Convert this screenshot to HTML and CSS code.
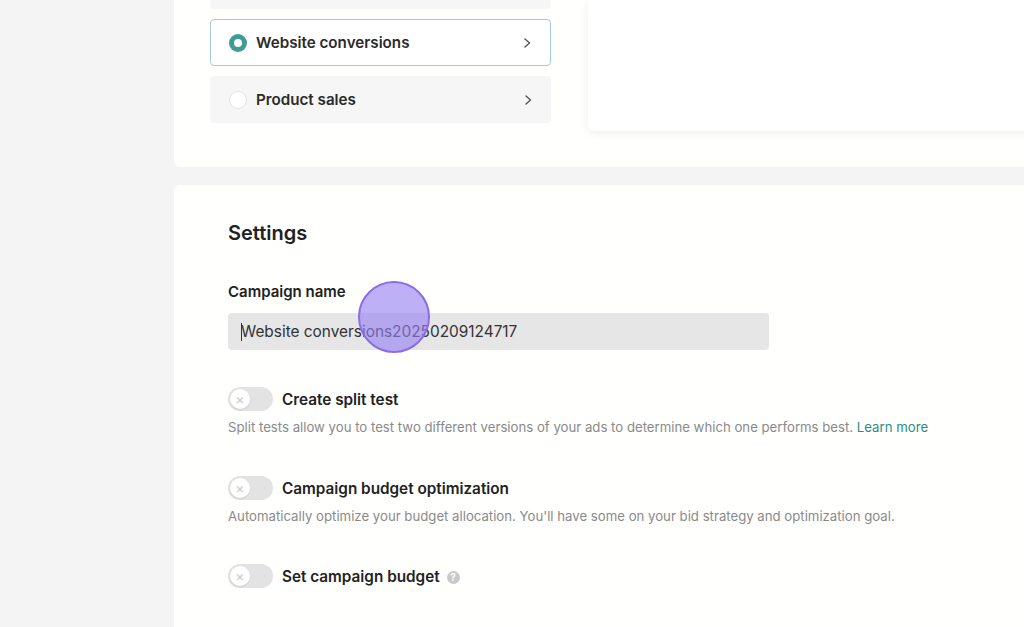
FILE: index.html
```html
<!DOCTYPE html>
<html>
<head>
<meta charset="utf-8">
<link rel="stylesheet" href="styles.css">
</head>
<body>
<div class="page">
  <aside class="side"></aside>
  <main class="main">
    <section class="card top-card">
      <div class="options">
        <div class="option option-muted"></div>
        <div class="option option-selected"><span class="radio radio-on"></span><span class="opt-label">Website conversions</span>
          <svg class="chev-svg" width="10" height="12" viewBox="0 0 10 12"><path d="M3 2l4.5 4L3 10" fill="none" stroke="#555" stroke-width="1.4" stroke-linecap="round" stroke-linejoin="round"/></svg>
        </div>
        <div class="option option-muted"><span class="radio"></span><span class="opt-label">Product sales</span>
          <svg class="chev-svg" width="10" height="12" viewBox="0 0 10 12"><path d="M3 2l4.5 4L3 10" fill="none" stroke="#555" stroke-width="1.4" stroke-linecap="round" stroke-linejoin="round"/></svg>
        </div>
      </div>
      <div class="preview"></div>
    </section>

    <section class="card settings">
      <h2 class="title">Settings</h2>
      <label class="field-label">Campaign name</label>
      <div class="input-wrap">
        <div class="input"><span class="caret"></span>Website conversions20250209124717</div>
        <span class="pointer"></span>
      </div>

      <div class="setting">
        <div class="toggle-row">
          <span class="toggle"><span class="knob">×</span></span>
          <span class="setting-label">Create split test</span>
        </div>
        <p class="desc">Split tests allow you to test two different versions of your ads to determine which one performs best. <a class="link">Learn more</a></p>
      </div>

      <div class="setting">
        <div class="toggle-row">
          <span class="toggle"><span class="knob">×</span></span>
          <span class="setting-label">Campaign budget optimization</span>
        </div>
        <p class="desc">Automatically optimize your budget allocation. You'll have some on your bid strategy and optimization goal.</p>
      </div>

      <div class="setting setting-last">
        <div class="toggle-row">
          <span class="toggle"><span class="knob">×</span></span>
          <span class="setting-label">Set campaign budget</span>
          <span class="help">?</span>
        </div>
      </div>
    </section>
  </main>
</div>
</body>
</html>
```

FILE: styles.css
```css
* { box-sizing: border-box; }
html, body { margin: 0; padding: 0; }
body {
  background: #f4f4f4;
  font-family: Inter, "Liberation Sans", Arial, sans-serif;
  color: #222;
  width: 1024px;
  height: 627px;
  overflow: hidden;
}
.page { display: flex; height: 627px; }
.side { width: 174px; flex: none; }
.main { flex: 1; display: flex; flex-direction: column; gap: 18px; min-width: 0; }
.card { background: #fffffe; }
.top-card {
  height: 167px;
  flex: none;
  display: flex;
  padding-left: 36px;
  border-radius: 0 0 0 6px;
  overflow: hidden;
}
.options { width: 341px; display: flex; flex-direction: column; gap: 10px; margin-top: -38px; }
.option {
  height: 47px;
  flex: none;
  border-radius: 4px;
  display: flex;
  align-items: center;
  padding: 0 18px 0 19px;
  font-size: 15.2px;
  font-weight: 600;
  color: #2a2a2a;
}
.option-muted { background: #f6f6f6; }
.option-selected { background: #fff; border: 1px solid #a8cecb; padding-left: 18px; }
.radio {
  width: 18px; height: 18px; border-radius: 50%;
  background: #fff; border: 1px solid #e4e4e4;
  flex: none;
  margin-right: 9px;
}
.radio-on { background: #3f9b95; border: none; position: relative; }
.radio-on::after {
  content: ""; position: absolute; left: 5px; top: 5px; width: 8px; height: 8px; border-radius: 50%; background: #fff;
}
.opt-label { flex: 1; }
.chev-svg { flex: none; }
.preview {
  flex: 1;
  margin-left: 37px;
  margin-right: -20px;
  height: 131px;
  background: #fff;
  border-radius: 0 0 0 6px;
  box-shadow: 0 2px 10px rgba(0,0,0,0.07);
}
.settings {
  flex: 1;
  border-radius: 6px 0 0 0;
  padding: 34px 0 0 54px;
}
.title { margin: 0; font-size: 20px; font-weight: 600; color: #222; line-height: 28px; }
.field-label { display: block; margin-top: 34px; font-size: 15px; font-weight: 600; color: #222; line-height: 22px; }
.input-wrap { position: relative; width: 541px; margin-top: 10px; }
.input {
  height: 37px; background: #e6e6e6; border-radius: 4px;
  font-size: 15.4px; color: #333; line-height: 37px; padding-left: 13px;
  position: relative;
}
.caret { position: absolute; left: 13px; top: 10px; width: 1px; height: 18px; background: #333; }
.pointer {
  position: absolute; left: 130px; top: -32px; width: 72px; height: 72px; border-radius: 50%;
  background: rgba(150, 128, 240, 0.62);
  border: 2px solid #8a6ce8;
}
.setting { margin-top: 37px; }
.setting + .setting { margin-top: 40px; }
.setting + .setting-last { margin-top: 39px; }
.toggle-row { display: flex; align-items: center; height: 24px; }
.toggle {
  width: 45px; height: 24px; border-radius: 12px; background: #e3e3e3; flex: none;
  display: flex; align-items: center; padding-left: 2px; margin-right: 9px;
}
.knob {
  width: 20px; height: 20px; border-radius: 50%; background: #fff;
  display: flex; align-items: center; justify-content: center;
  color: #c8c8c8; font-size: 14px; line-height: 1; font-weight: 400;
  box-shadow: 0 1px 2px rgba(0,0,0,0.1);
}
.setting-label { font-size: 15.3px; font-weight: 600; color: #222; }
.help {
  width: 13px; height: 13px; border-radius: 50%; background: #c9c9c9; color: #fff;
  font-size: 10px; font-weight: 700; display: inline-flex; align-items: center; justify-content: center;
  margin-left: 7px; margin-top: 2px;
}
.desc { margin: 7px 0 0; font-size: 13.2px; color: #8a8a8a; line-height: 18px; }
.link { color: #2d8b84; }
```
